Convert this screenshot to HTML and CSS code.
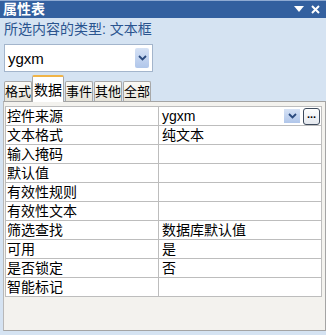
FILE: index.html
```html
<!DOCTYPE html>
<html lang="zh-CN">
<head>
  <meta charset="UTF-8">
  <title>属性表</title>
  <link rel="stylesheet" href="styles.css">
</head>
<body>
  <div class="pane">
    <div class="titlebar">
      <span class="title">属性表</span>
      <span class="controls">
        <svg width="10" height="7" viewBox="0 0 10 7"><path d="M0 0 H10 L5 6 Z" fill="#fff"/></svg>
        <svg width="9" height="9" viewBox="0 0 9 9"><path d="M1 1 L8 8 M8 1 L1 8" stroke="#fff" stroke-width="2"/></svg>
      </span>
    </div>

    <div class="selection-type">所选内容的类型: 文本框</div>

    <div class="combo">
      <span class="combo-text">ygxm</span>
      <span class="drop-btn">
        <svg width="9" height="6" viewBox="0 0 9 6"><path d="M1 1 L4.5 4.5 L8 1" stroke="#2b4a7e" stroke-width="1.8" fill="none"/></svg>
      </span>
    </div>

    <div class="tabs">
      <div class="tab">格式</div>
      <div class="tab active">数据</div>
      <div class="tab">事件</div>
      <div class="tab">其他</div>
      <div class="tab">全部</div>
    </div>

    <div class="sheet">
      <table class="props">
        <tr>
          <td class="label">控件来源</td>
          <td class="value">
            <div class="value-row">
              <span>ygxm</span>
              <span class="cell-btns">
                <span class="cell-drop">
                  <svg width="9" height="6" viewBox="0 0 9 6"><path d="M1 1 L4.5 4.5 L8 1" stroke="#2b4a7e" stroke-width="1.8" fill="none"/></svg>
                </span>
                <span class="builder">...</span>
              </span>
            </div>
          </td>
        </tr>
        <tr><td class="label">文本格式</td><td class="value">纯文本</td></tr>
        <tr><td class="label">输入掩码</td><td class="value"></td></tr>
        <tr><td class="label">默认值</td><td class="value"></td></tr>
        <tr><td class="label">有效性规则</td><td class="value"></td></tr>
        <tr><td class="label">有效性文本</td><td class="value"></td></tr>
        <tr><td class="label">筛选查找</td><td class="value">数据库默认值</td></tr>
        <tr><td class="label">可用</td><td class="value">是</td></tr>
        <tr><td class="label">是否锁定</td><td class="value">否</td></tr>
        <tr><td class="label">智能标记</td><td class="value"></td></tr>
      </table>
    </div>
  </div>
</body>
</html>
```

FILE: styles.css
```css
body {
  margin: 0;
  background: #d5e3f2;
  font-family: "Liberation Sans", "Noto Sans CJK SC", sans-serif;
  font-size: 14px;
  color: #000;
}
.pane {
  width: 326px;
  height: 335px;
  overflow: hidden;
}
.titlebar {
  height: 17px;
  border-top: 1px solid #8eaad2;
  background: #33609f;
  display: flex;
  align-items: center;
  justify-content: space-between;
  padding: 0 6px 0 3px;
}
.title {
  color: #fff;
  font-weight: bold;
  font-size: 14px;
  line-height: 17px;
}
.controls {
  display: flex;
  align-items: center;
  gap: 7px;
}
.selection-type {
  height: 22px;
  line-height: 22px;
  padding-left: 4px;
  color: #2a548f;
}
.combo {
  margin: 4px 0 0 4px;
  width: 147px;
  height: 26px;
  border: 1px solid #a3b5cc;
  background: #fff;
  display: flex;
  align-items: center;
  justify-content: space-between;
}
.combo-text {
  padding-left: 3px;
  font-size: 15px;
}
.drop-btn {
  width: 14px;
  height: 20px;
  margin-right: 3px;
  background: linear-gradient(#d6e2f5, #b0c6ea);
  border-radius: 2px;
  display: flex;
  align-items: center;
  justify-content: center;
}
.tabs {
  height: 29px;
  display: flex;
  align-items: flex-end;
  padding-left: 4px;
  gap: 1px;
}
.tab {
  height: 19px;
  line-height: 20px;
  font-size: 13px;
  padding: 0;
  border: 1px solid #a8a8a8;
  border-bottom: none;
  border-radius: 2px 2px 0 0;
  background: linear-gradient(#fbfaf6, #e6e4da);
}
.tab.active {
  height: 25px;
  line-height: 27px;
  font-size: 14px;
  padding: 0 1px;
  background: #fff;
  border-top: 2px solid #f0b448;
  position: relative;
  top: 1px;
  margin-left: -1px;
}
.sheet {
  margin-left: 3px;
  width: 319px;
  height: 224px;
  background: #f3f2ee;
  border: 1px solid #a4a4a4;
  border-left-color: #b8b8b8;
  padding: 4px 1px 0 1px;
}
.props {
  width: 317px;
  border-collapse: collapse;
  background: #fff;
}
.props td {
  height: 18px;
  padding: 0;
  border: 1px solid #bdbdbd;
  line-height: 18px;
  white-space: nowrap;
}
.props .label {
  width: 151px;
  padding-left: 1px;
}
.props .value {
  padding-left: 3px;
}
.value-row {
  display: flex;
  align-items: center;
  justify-content: space-between;
}
.cell-btns {
  display: flex;
  align-items: center;
  gap: 3px;
}
.cell-drop {
  width: 16px;
  height: 14px;
  background: linear-gradient(#d6e2f5, #b0c6ea);
  display: flex;
  align-items: center;
  justify-content: center;
}
.builder {
  width: 15px;
  height: 15px;
  border: 1px solid #3d4a5c;
  border-radius: 3px;
  background: linear-gradient(#ffffff, #e4e8ee);
  font-size: 11px;
  font-weight: bold;
  line-height: 10px;
  text-align: center;
  margin-right: 1px;
}
```
